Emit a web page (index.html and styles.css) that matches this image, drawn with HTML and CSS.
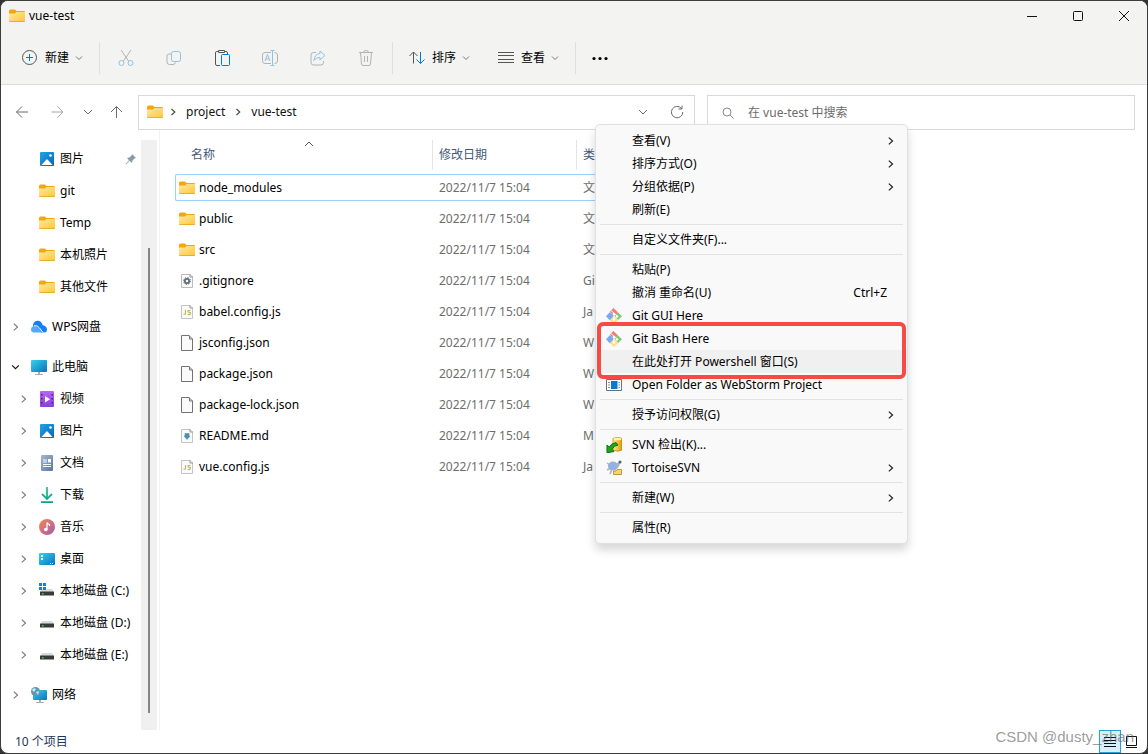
FILE: index.html
```html
<!DOCTYPE html>
<html lang="zh-CN">
<head>
<meta charset="utf-8">
<title>vue-test</title>
<link rel="stylesheet" href="styles.css">
</head>
<body>
<svg class="defs" aria-hidden="true">
  <defs>
    <linearGradient id="g-folder" x1="0" y1="0" x2="1" y2="1"><stop offset="0" stop-color="#ffe9a3"/><stop offset="1" stop-color="#ffc83d"/></linearGradient>
    <linearGradient id="g-blue" x1="0" y1="0" x2="1" y2="1"><stop offset="0" stop-color="#1fa5ea"/><stop offset="1" stop-color="#0a63b8"/></linearGradient>
    <linearGradient id="g-teal" x1="0" y1="0" x2="1" y2="1"><stop offset="0" stop-color="#36d3ea"/><stop offset="1" stop-color="#0b72bd"/></linearGradient>
    <linearGradient id="g-purple" x1="0" y1="0" x2="0" y2="1"><stop offset="0" stop-color="#b866f5"/><stop offset="1" stop-color="#8540dc"/></linearGradient>
    <linearGradient id="g-doc" x1="0" y1="0" x2="1" y2="1"><stop offset="0" stop-color="#a6b9cf"/><stop offset="1" stop-color="#57779d"/></linearGradient>
    <linearGradient id="g-music" x1="0" y1="0" x2="1" y2="1"><stop offset="0" stop-color="#f5874f"/><stop offset="1" stop-color="#a55bb2"/></linearGradient>
    <linearGradient id="g-down" x1="0" y1="0" x2="0" y2="1"><stop offset="0" stop-color="#31c48d"/><stop offset="1" stop-color="#0f9d94"/></linearGradient>
    <linearGradient id="g-gold" x1="0" y1="0" x2="1" y2="0"><stop offset="0" stop-color="#ffec80"/><stop offset="1" stop-color="#dd9b0c"/></linearGradient>
  </defs>
  <symbol id="folder" viewBox="0 0 16 16"><path d="M0 3Q0 1.500 1.500 1.500H6L7.500 3H15Q16 3 16 4V8H0Z" fill="#f2a80d"/><rect y="5" width="16" height="9" rx="1" fill="#e3a220"/><path d="M0 5.500H6L7.500 4H16V12.500Q16 13.200 15 13.200H1Q0 13.200 0 12.500Z" fill="url(#g-folder)"/></symbol>
  <symbol id="picture" viewBox="0 0 16 16"><rect x="1" y="1" width="14" height="14" rx="1" fill="url(#g-blue)"/><path d="M2.500 14 7.500 8.500Q8 8 8.500 8.500L13.500 14Z" fill="#fff"/><circle cx="11.500" cy="4.500" r="1.300" fill="#fff"/></symbol>
  <symbol id="cloud" viewBox="0 0 16 16"><path d="M2 7A4.500 4.500 0 0 1 11.500 6Q16 7 16 10.500T12.500 13.500H10Z" fill="#167ff7"/><path d="M0 10.500Q0 7.500 3 7Q5 6.500 7 8.500L11.500 13.500H3Q0 13.500 0 10.500Z" fill="#55a8ff"/><path d="M3 6.800Q6.500 6 8.500 9L12 13.500" fill="none" stroke="#fff"/></symbol>
  <symbol id="monitor" viewBox="0 0 16 16"><rect y="1" width="16" height="12" rx="1" fill="url(#g-teal)"/><path d="M7 13H9V15H7ZM4 15H12V16H4Z" fill="#a2adb6"/></symbol>
  <symbol id="video" viewBox="0 0 16 16"><rect x="1" width="14" height="16" rx="1" fill="url(#g-purple)"/><path d="M2 3H3.500V4.500H2ZM2 7H3.500V8.500H2ZM2 11H3.500V12.500H2ZM12.500 3H14V4.500H12.500ZM12.500 7H14V8.500H12.500ZM12.500 11H14V12.500H12.500Z" fill="#4a237d"/><path d="M6 5V11.500L11 8.200Z" fill="#fff"/></symbol>
  <symbol id="doc" viewBox="0 0 16 16"><rect x="2" width="12" height="16" rx="1" fill="url(#g-doc)"/><path d="M4 5H8M4 7H8M4 9.500H12M4 11.500H12" stroke="#fff"/><path d="M9 4H12V7.500H9Z" fill="#fff"/></symbol>
  <symbol id="download" viewBox="0 0 16 16"><path d="M8 0V12M3 7 8 12 13 7M2 15.200H14" fill="none" stroke="url(#g-down)" stroke-width="1.800"/></symbol>
  <symbol id="music" viewBox="0 0 16 16"><circle cx="8" cy="8" r="8" fill="url(#g-music)"/><circle cx="6.800" cy="10.500" r="1.800" fill="#fff"/><path d="M8 10.500V3.500Q8.500 5 10.500 5.500V7" fill="none" stroke="#fff" stroke-width="1.200"/></symbol>
  <symbol id="desktop" viewBox="0 0 16 16"><rect y="2" width="16" height="12" rx="1" fill="url(#g-teal)"/><path d="M2 4H4V6H2ZM2 7H4V9H2ZM11 12H12V13H11ZM13 12H14V13H13Z" fill="#fff"/></symbol>
  <symbol id="disk" viewBox="0 0 16 16"><path d="M3 6H13L15 9H1Z" fill="#d9dbdd"/><rect x="1" y="8.500" width="14" height="4" rx=".5" fill="#3a3a3a"/><path d="M3 10H4.500V11.500H3Z" fill="#30d158"/></symbol>
  <symbol id="sysdisk" viewBox="0 0 16 16"><path d="M3 6H13L15 9H1Z" fill="#d9dbdd"/><rect x="1" y="8.500" width="14" height="4" rx=".5" fill="#3a3a3a"/><path d="M3 10H4.500V11.500H3Z" fill="#30d158"/><path d="M0 0H3V3H0ZM4 0H7V3H4ZM0 4H3V7H0ZM4 4H7V7H4Z" fill="#0b86d8"/></symbol>
  <symbol id="network" viewBox="0 0 16 16"><rect x="2" y="3" width="14" height="10" rx="1" fill="url(#g-teal)"/><path d="M8 13H10V15H8ZM5 15H13V16H5Z" fill="#a2adb6"/><circle cx="4.500" cy="4.500" r="4.500" fill="#6097b5"/><path d="M1 3Q3 0 5 2L3 5ZM5 5 8 4 7 8Z" fill="#d0e8ef"/></symbol>
  <symbol id="pin" viewBox="0 0 12 12"><path d="M7 1 11 5 9.500 5.500 7.500 7.500 7 10 4.500 7.800 1 11.500 .5 11 4 7.300 2 5 4.500 4.500 6.500 2.500Z" fill="#8b98a5"/></symbol>
  <symbol id="gear-file" viewBox="0 0 16 16"><path d="M2.500 1.500H11L13.500 4V14.500H2.500Z" fill="#fafafa" stroke="#bbb"/><path d="M11 1V4H14" fill="none" stroke="#999"/><circle cx="8" cy="8" r="2.200" fill="none" stroke="#5c707c" stroke-width="1.800"/><circle cx="8" cy="8" r="3.500" fill="none" stroke="#5c707c" stroke-dasharray="1.300 1.450"/></symbol>
  <symbol id="js-file" viewBox="0 0 16 16"><path d="M2.500 1.500H11L13.500 4V14.500H2.500Z" fill="#fafafa" stroke="#c4c4c4"/><path d="M11 1V4H14" fill="none" stroke="#999"/><path d="M6.500 6V9.500Q6.500 10.500 4.500 10.200M11.500 6.500H10Q8.800 6.500 9 7.500T10.500 8.300T11.200 9.700T8.500 10.300" fill="none" stroke="#bcbf3c" stroke-width="1.200"/></symbol>
  <symbol id="md-file" viewBox="0 0 16 16"><path d="M2.500 1.500H11L13.500 4V14.500H2.500Z" fill="#fafafa" stroke="#c4c4c4"/><path d="M11 1V4H14" fill="none" stroke="#999"/><path d="M6 5 7 6 8 5 9 6 10 5V8H11L8 11.500 5 8H6Z" fill="#4b90aa" stroke="#4b90aa" stroke-width=".5"/></symbol>
  <symbol id="blank-file" viewBox="0 0 16 16"><path d="M2.500.5H10L13.500 4V15.500H2.500Z" fill="#fafafa" stroke="#737373"/><path d="M10.500.5V4H13.500" fill="none" stroke="#737373"/></symbol>
  <symbol id="chev-r" viewBox="0 0 8 8"><path d="M2.500 1 5.800 4 2.500 7" fill="none" stroke="currentColor" stroke-width="1.100"/></symbol>
  <symbol id="chev-d" viewBox="0 0 8 8"><path d="M1 2.500 4 5.500 7 2.500" fill="none" stroke="currentColor"/></symbol>
  <symbol id="git" viewBox="0 0 16 16"><path d="M7.500 0 12 4.500 8 8.500 4 3.500Z" fill="#f47c77"/><path d="M4 4 8 8 4 12.500 0 8.300Z" fill="#78a9f5"/><path d="M12 4.500 16 8.300 12 12 8.500 8Z" fill="#80c776"/><path d="M8 8 12 12 8 16 4 12Z" fill="#ffdf80"/><path d="M5 2.500 11 8M8 5.500V12" stroke="#fff"/><circle cx="8" cy="6" r="1.300" fill="#fff"/><circle cx="11" cy="8.500" r="1.300" fill="#fff"/><circle cx="8" cy="11.500" r="1.300" fill="#fff"/></symbol>
  <symbol id="program" viewBox="0 0 16 16"><path d="M.5 2.500H15.500V13.500H.5Z" fill="#fff" stroke="#68737b"/><path d="M2 5.500H4M2 8H4M2 10.500H4M12.500 5.500H14M12.500 8H14M12.500 10.500H14" stroke="#888"/><rect x="5" y="4" width="6.500" height="8" fill="#0a78d0"/></symbol>
  <symbol id="svn" viewBox="0 0 16 16"><path d="M7 1.500Q11.500-1 16 1.500V13Q12 15.500 7 13Z" fill="url(#g-gold)" stroke="#b58113" stroke-width=".7"/><ellipse cx="11.500" cy="2" rx="4" ry="1.300" fill="#fff3b2"/><path d="M1 8 3.300 10Q5 6.500 10 5.500L12 8Q8 8.500 6 12.200L8 14.500 1 15.800Z" fill="#20a61c" stroke="#08710d"/></symbol>
  <symbol id="tortoise" viewBox="0 0 16 16"><path d="M1 3 4 5M1 10 4 8.500M4 14 5.500 10M11 4 15 2" stroke="#a9b3bd" stroke-width="1.500"/><ellipse cx="7" cy="6" rx="4.500" ry="4" fill="#93b0ea" stroke="#9aaccb"/><path d="M10.500 8 13 4" stroke="#a5b1bb" stroke-width="2"/><circle cx="14" cy="2" r="1.500" fill="#3b6684"/><path d="M7.500 11H10L11 9.500H15.500V14.500H7.500Z" fill="#f8d569" stroke="#a98525" stroke-width=".8"/></symbol>
</svg>

<div class="window">
  <header class="titlebar">
    <svg class="ico"><use href="#folder"/></svg>
    <h1 class="title">vue-test</h1>
    <div class="controls">
      <button class="control" aria-label="最小化"><svg class="ico" viewBox="0 0 16 16"><path d="M3 8.500H13" class="ln black"/></svg></button>
      <button class="control" aria-label="最大化"><svg class="ico" viewBox="0 0 16 16"><rect x="3.500" y="3.500" width="9" height="9" rx="1" class="ln black"/></svg></button>
      <button class="control" aria-label="关闭"><svg class="ico" viewBox="0 0 16 16"><path d="M3 3 13 13M13 3 3 13" class="ln black"/></svg></button>
    </div>
  </header>

  <div class="toolbar" role="toolbar">
    <button class="tool"><svg class="ico18" viewBox="0 0 18 18"><circle cx="8.500" cy="8.500" r="7" class="ln dark"/><path d="M8.500 5V12M5 8.500H12" class="ln accent"/></svg>新建<svg class="chev"><use href="#chev-d"/></svg></button>
    <span class="divider after-tool"></span>
    <div class="icon-tools">
      <button class="icon-tool faded" aria-label="剪切"><svg class="ico18" viewBox="0 0 18 18"><path d="M4 1 11.500 12M14 1 6.500 12" class="ln dark"/><circle cx="4.500" cy="14" r="2.500" class="ln accent"/><circle cx="13.500" cy="14" r="2.500" class="ln accent"/></svg></button>
      <button class="icon-tool faded" aria-label="复制"><svg class="ico18" viewBox="0 0 18 18"><path d="M6 5H4Q2 5 2 7V13Q2 15.500 4.500 15.500H8Q10 15.500 10.500 13.500" class="ln dark"/><rect x="6.500" y="2.500" width="9" height="10" rx="2" class="ln accent"/></svg></button>
      <button class="icon-tool" aria-label="粘贴"><svg class="ico18" viewBox="0 0 18 18"><path d="M6 2.500H3.500Q2.500 2.500 2.500 4V15Q2.500 16.500 4 16.500H7M12 2.500H13Q14.500 2.500 14.500 4V5M5.500 1.500H11.500V3.500H5.500Z" class="ln dark"/><rect x="8.500" y="5.500" width="8" height="11" rx="1" class="ln accent"/></svg></button>
      <button class="icon-tool faded" aria-label="重命名"><svg class="ico18" viewBox="0 0 18 18"><path d="M10 3.500H4Q1.500 3.500 1.500 6V12Q1.500 14.500 4 14.500H10M13.500 3.500Q16.500 3.500 16.500 6V12Q16.500 14.500 13.500 14.500" class="ln dark"/><path d="M11.500 1.500V16.500M9.500 1.500H13.500M9.500 16.500H13.500M4 12 6.500 5.500 9 12M5 10H8" class="ln accent"/></svg></button>
      <button class="icon-tool faded" aria-label="共享"><svg class="ico18" viewBox="0 0 18 18"><path d="M7 3.500H4.500Q2 3.500 2 6V13.500Q2 16 4.500 16H12Q14.500 16 14.500 13.500V12" class="ln dark"/><path d="M11 2 16 6.500 11 11V8.500Q7 8 5 11.500Q5.500 5 11 4.500Z" class="ln accent"/></svg></button>
      <button class="icon-tool faded" aria-label="删除"><svg class="ico18" viewBox="0 0 18 18"><path d="M2 3.500H16M6.500 3.500Q6.500 1.500 9 1.500T11.500 3.500M3.500 3.500 4.500 15Q4.500 16.500 6 16.500H12Q13.500 16.500 13.500 15L14.500 3.500M7.500 7V13M10.500 7V13" class="ln dark"/></svg></button>
    </div>
    <span class="divider"></span>
    <button class="tool sort"><svg class="ico18" viewBox="0 0 18 18"><path d="M5.500 14.500V3M1.500 7 5.500 3 9.500 7" class="ln dark"/><path d="M12.500 3V14.500M8.500 10.500 12.500 14.500 16.500 10.500" class="ln accent"/></svg>排序<svg class="chev"><use href="#chev-d"/></svg></button>
    <button class="tool view"><svg class="ico18" viewBox="0 0 18 18"><path d="M1 3.500H17M1 6.500H17M1 10.500H17M1 13.500H17" class="ln dark"/></svg>查看<svg class="chev"><use href="#chev-d"/></svg></button>
    <span class="divider after-tool"></span>
    <button class="tool more" aria-label="更多"><svg class="ico18" viewBox="0 0 18 18"><circle cx="3" cy="9.500" r="1.600"/><circle cx="9" cy="9.500" r="1.600"/><circle cx="15" cy="9.500" r="1.600"/></svg></button>
  </div>

  <div class="navbar">
    <div class="nav-buttons">
      <button class="nav-btn" aria-label="后退"><svg class="ico" viewBox="0 0 16 16"><path d="M14 8H2.500M8 2.500 2.500 8 8 13.500" class="ln gray"/></svg></button>
      <button class="nav-btn off" aria-label="前进"><svg class="ico" viewBox="0 0 16 16"><path d="M2.500 8H14M8.500 2.500 14 8 8.500 13.500" class="ln gray"/></svg></button>
      <button class="nav-btn narrow" aria-label="最近位置"><svg class="ico" viewBox="0 0 16 16"><path d="M4 6 8 10 12 6" class="ln gray"/></svg></button>
      <button class="nav-btn narrow" aria-label="上移"><svg class="ico" viewBox="0 0 16 16"><path d="M8.500 14V2.500M3 8 8.500 2.500 14 8" class="ln gray"/></svg></button>
    </div>
    <div class="address">
      <svg class="ico"><use href="#folder"/></svg>
      <svg class="crumb-chev"><use href="#chev-r"/></svg>
      <a class="crumb" href="#project">project</a>
      <svg class="crumb-chev"><use href="#chev-r"/></svg>
      <a class="crumb" href="#vue-test">vue-test</a>
      <button class="addr-btn first" aria-label="历史记录"><svg class="ico" viewBox="0 0 16 16"><path d="M4 6 8 10 12 6" class="ln gray"/></svg></button>
      <button class="addr-btn" aria-label="刷新"><svg class="ico" viewBox="0 0 16 16"><path d="M12.500 4.500A5.700 5.700 0 1 0 13.800 8M13 1.500V5H9.500" class="ln gray"/></svg></button>
    </div>
    <label class="search">
      <svg class="ico" viewBox="0 0 16 16"><circle cx="7" cy="7" r="4" class="ln light"/><path d="M10 10 13.500 13.500" class="ln light"/></svg>
      <input class="search-input" type="text" aria-label="搜索" placeholder="在 vue-test 中搜索">
    </label>
  </div>

  <div class="main">
    <nav class="sidebar">
      <ul class="tree">
        <li class="node child"><span class="twist"></span><svg class="ico"><use href="#picture"/></svg>图片<svg class="pin"><use href="#pin"/></svg></li>
        <li class="node child"><span class="twist"></span><svg class="ico"><use href="#folder"/></svg>git</li>
        <li class="node child"><span class="twist"></span><svg class="ico"><use href="#folder"/></svg>Temp</li>
        <li class="node child"><span class="twist"></span><svg class="ico"><use href="#folder"/></svg>本机照片</li>
        <li class="node child"><span class="twist"></span><svg class="ico"><use href="#folder"/></svg>其他文件</li>
        <li class="node root"><svg class="twist"><use href="#chev-r"/></svg><svg class="ico"><use href="#cloud"/></svg>WPS网盘</li>
        <li class="node root"><svg class="twist open"><use href="#chev-d"/></svg><svg class="ico"><use href="#monitor"/></svg>此电脑</li>
        <li class="node child"><svg class="twist"><use href="#chev-r"/></svg><svg class="ico"><use href="#video"/></svg>视频</li>
        <li class="node child"><svg class="twist"><use href="#chev-r"/></svg><svg class="ico"><use href="#picture"/></svg>图片</li>
        <li class="node child"><svg class="twist"><use href="#chev-r"/></svg><svg class="ico"><use href="#doc"/></svg>文档</li>
        <li class="node child"><svg class="twist"><use href="#chev-r"/></svg><svg class="ico"><use href="#download"/></svg>下载</li>
        <li class="node child"><svg class="twist"><use href="#chev-r"/></svg><svg class="ico"><use href="#music"/></svg>音乐</li>
        <li class="node child"><svg class="twist"><use href="#chev-r"/></svg><svg class="ico"><use href="#desktop"/></svg>桌面</li>
        <li class="node child"><svg class="twist"><use href="#chev-r"/></svg><svg class="ico"><use href="#sysdisk"/></svg>本地磁盘 (C:)</li>
        <li class="node child"><svg class="twist"><use href="#chev-r"/></svg><svg class="ico"><use href="#disk"/></svg>本地磁盘 (D:)</li>
        <li class="node child"><svg class="twist"><use href="#chev-r"/></svg><svg class="ico"><use href="#disk"/></svg>本地磁盘 (E:)</li>
        <li class="node root"><svg class="twist"><use href="#chev-r"/></svg><svg class="ico"><use href="#network"/></svg>网络</li>
      </ul>
      <div class="scroll"><span class="thumb"></span></div>
    </nav>

    <section class="files">
      <table class="list">
        <colgroup><col class="c-name"><col class="c-date"><col class="c-type"></colgroup>
        <thead><tr><th class="name-head"><div class="head-cell">名称<svg class="sort-mark" viewBox="0 0 10 6"><path d="M1 5 5 1 9 5" class="ln dark"/></svg></div></th><th>修改日期</th><th>类</th></tr></thead>
        <tbody>
          <tr class="selected"><td><div class="file"><svg class="ico"><use href="#folder"/></svg>node_modules</div></td><td>2022/11/7 15:04</td><td>文</td></tr>
          <tr><td><div class="file"><svg class="ico"><use href="#folder"/></svg>public</div></td><td>2022/11/7 15:04</td><td>文</td></tr>
          <tr><td><div class="file"><svg class="ico"><use href="#folder"/></svg>src</div></td><td>2022/11/7 15:04</td><td>文</td></tr>
          <tr><td><div class="file"><svg class="ico"><use href="#gear-file"/></svg>.gitignore</div></td><td>2022/11/7 15:04</td><td>Gi</td></tr>
          <tr><td><div class="file"><svg class="ico"><use href="#js-file"/></svg>babel.config.js</div></td><td>2022/11/7 15:04</td><td>Ja</td></tr>
          <tr><td><div class="file"><svg class="ico"><use href="#blank-file"/></svg>jsconfig.json</div></td><td>2022/11/7 15:04</td><td>W</td></tr>
          <tr><td><div class="file"><svg class="ico"><use href="#blank-file"/></svg>package.json</div></td><td>2022/11/7 15:04</td><td>W</td></tr>
          <tr><td><div class="file"><svg class="ico"><use href="#blank-file"/></svg>package-lock.json</div></td><td>2022/11/7 15:04</td><td>W</td></tr>
          <tr><td><div class="file"><svg class="ico"><use href="#md-file"/></svg>README.md</div></td><td>2022/11/7 15:04</td><td>M</td></tr>
          <tr><td><div class="file"><svg class="ico"><use href="#js-file"/></svg>vue.config.js</div></td><td>2022/11/7 15:04</td><td>Ja</td></tr>
        </tbody>
      </table>
    </section>
  </div>

  <footer class="status">
    <span class="count">10 个项目</span>
    <div class="views">
      <button class="view-btn on" aria-label="详细信息"><svg class="ico" viewBox="0 0 16 16"><path d="M2 3.500H14M2 6.500H14M2 9.500H14M2 12.500H14" class="ln black"/></svg></button>
      <button class="view-btn" aria-label="大图标"><svg class="ico" viewBox="0 0 16 16"><path d="M2.500 2.500H12.500V11.500H2.500ZM2 13.500H13" class="ln black"/></svg></button>
    </div>
  </footer>

  <div class="menu" role="menu">
    <button class="item" role="menuitem"><span class="slot"></span><span class="label">查看(V)</span><svg class="arrow"><use href="#chev-r"/></svg></button>
    <button class="item" role="menuitem"><span class="slot"></span><span class="label">排序方式(O)</span><svg class="arrow"><use href="#chev-r"/></svg></button>
    <button class="item" role="menuitem"><span class="slot"></span><span class="label">分组依据(P)</span><svg class="arrow"><use href="#chev-r"/></svg></button>
    <button class="item" role="menuitem"><span class="slot"></span><span class="label">刷新(E)</span></button>
    <hr class="sep">
    <button class="item" role="menuitem"><span class="slot"></span><span class="label">自定义文件夹(F)...</span></button>
    <hr class="sep">
    <button class="item" role="menuitem"><span class="slot"></span><span class="label">粘贴(P)</span></button>
    <button class="item" role="menuitem"><span class="slot"></span><span class="label">撤消 重命名(U)</span><span class="keys">Ctrl+Z</span></button>
    <button class="item" role="menuitem"><svg class="slot"><use href="#git"/></svg><span class="label">Git GUI Here</span></button>
    <div class="marked">
      <button class="item" role="menuitem"><svg class="slot"><use href="#git"/></svg><span class="label">Git Bash Here</span></button>
      <button class="item hovered" role="menuitem"><span class="slot"></span><span class="label">在此处打开 Powershell 窗口(S)</span></button>
    </div>
    <button class="item" role="menuitem"><svg class="slot"><use href="#program"/></svg><span class="label">Open Folder as WebStorm Project</span></button>
    <hr class="sep">
    <button class="item" role="menuitem"><span class="slot"></span><span class="label">授予访问权限(G)</span><svg class="arrow"><use href="#chev-r"/></svg></button>
    <hr class="sep">
    <button class="item" role="menuitem"><svg class="slot"><use href="#svn"/></svg><span class="label">SVN 检出(K)...</span></button>
    <button class="item" role="menuitem"><svg class="slot"><use href="#tortoise"/></svg><span class="label">TortoiseSVN</span><svg class="arrow"><use href="#chev-r"/></svg></button>
    <hr class="sep">
    <button class="item" role="menuitem"><span class="slot"></span><span class="label">新建(W)</span><svg class="arrow"><use href="#chev-r"/></svg></button>
    <hr class="sep">
    <button class="item" role="menuitem"><span class="slot"></span><span class="label">属性(R)</span></button>
  </div>
  <span class="watermark">CSDN @dusty_zhan</span>
</div>
</body>
</html>
```
FILE: styles.css
```css
* { box-sizing: border-box; }
body {
  margin: 0;
  background: #333;
  color: #000;
  font: 12px/16px "Noto Sans", "Noto Sans CJK SC", sans-serif;
}
button { border: 0; padding: 0; margin: 0; background: none; font: inherit; color: inherit; }
svg { flex: none; display: block; }
.defs { position: absolute; width: 0; height: 0; }
.ico { width: 16px; height: 16px; }
.ico18 { width: 18px; height: 18px; }
.ln { fill: none; stroke-width: 1; }
.dark { stroke: #555; }
.gray { stroke: #6b6b6b; }
.light { stroke: #8a8a8a; }
.black { stroke: #111; }
.accent { stroke: #0078d4; }

.window {
  position: relative;
  display: flex;
  flex-direction: column;
  min-height: 100vh;
  border: 1px solid #3c3c3c;
  border-radius: 8px;
  background: #fff;
  overflow: hidden;
}

/* Title bar */
.titlebar { display: flex; align-items: center; gap: 4px; height: 30px; padding-left: 8px; background: #f3f3f2; }
.title { margin: 0; font-size: 12px; font-weight: 400; line-height: 16px; flex: 1; }
.controls { display: flex; height: 100%; }
.control { display: flex; align-items: center; justify-content: center; width: 46px; }

/* Toolbar */
.toolbar { display: flex; align-items: center; height: 54px; padding: 1px 0 0 20px; background: #f3f3f2; border-bottom: 1px solid #dcdcdc; }
.tool { display: flex; align-items: center; gap: 6px; }
.chev { width: 8px; height: 8px; color: #777; }
.divider { width: 1px; height: 32px; background: #e0e0e0; }
.after-tool { margin-left: 16px; }
.icon-tools { display: flex; padding: 0 2px; }
.icon-tool { display: flex; justify-content: center; width: 48px; }
.faded svg { opacity: .4; }
.sort { margin-left: 15px; }
.view { margin-left: 27px; }
.more { margin-left: 15px; }

/* Address row */
.navbar { display: flex; align-items: center; padding: 10px 12px 0 3px; }
.nav-buttons { display: flex; width: 134px; padding-bottom: 1px; }
.nav-btn { display: flex; justify-content: center; width: 35px; }
.nav-btn.narrow { width: 28px; }
.off { opacity: .6; }
.address, .search { display: flex; align-items: center; height: 35px; border: 1px solid #d9d9d9; background: #fff; }
.address { flex: 547 1 0; padding: 0 0 2px 8px; }
.crumb { padding-right: 3px; color: #111; text-decoration: none; }
.crumb-chev { width: 8px; height: 8px; margin: 0 9px 0 6px; color: #444; }
.addr-btn { width: 34px; display: flex; justify-content: center; }
.addr-btn.first { margin-left: auto; }
.search { flex: 414 1 0; margin-left: 12px; padding-left: 12px; gap: 12px; }
.search-input { flex: 1; min-width: 0; border: 0; outline: 0; padding: 0; background: none; font: inherit; color: #111; }
.search-input::placeholder { color: #6b6b6b; opacity: 1; }

/* Body */
.main { flex: 1; display: flex; }
.sidebar { display: flex; width: 159px; padding-top: 10px; border-right: 1px solid #f2f2f2; }
.tree { flex: 1; margin: 0; padding: 3px 0 0; list-style: none; }
.node { display: flex; align-items: center; gap: 5px; height: 32px; padding-right: 4px; white-space: nowrap; }
.root { margin-top: 8px; padding-left: 10px; }
.child { padding-left: 18px; }
.twist { width: 9px; height: 10px; margin-right: 6px; color: #808080; }
.twist.open { color: #111; }
.pin { width: 12px; height: 12px; margin-left: auto; }
.scroll { width: 16px; margin-right: 2px; background: #f0f0f0; display: flex; justify-content: center; padding: 108px 0 17px; }
.thumb { width: 2px; background: #858585; }

/* File list */
.files { flex: 1; padding: 6px 0 0 15px; }
.list { width: 425px; table-layout: fixed; border-spacing: 0 4px; }
.c-name { width: 258px; }
.c-date { width: 144px; }
.list th { height: 30px; padding: 0 0 0 6px; border-right: 1px solid #e4e4e4; font-weight: 400; text-align: left; color: #44597a; white-space: nowrap; }
.list .name-head { padding-left: 16px; }
.head-cell { display: flex; align-items: center; }
.sort-mark { width: 10px; height: 6px; margin: 0 0 22px 89px; }
.list td { height: 27px; padding: 0 0 0 6px; border: solid transparent; border-width: 1px 0; color: #6d6d6d; white-space: nowrap; }
.list td:first-child { padding-left: 4px; color: #000; }
.list .selected td { border-color: #99d1ff; }
.list .selected td:first-child { border-left: 1px solid #99d1ff; border-radius: 2px 0 0 2px; padding-left: 3px; }
.file { display: flex; align-items: center; gap: 4px; }

/* Status bar */
.status { display: flex; align-items: center; justify-content: space-between; height: 23px; padding: 0 4px 0 14px; color: #1e395b; }
.views { display: flex; }
.view-btn { display: flex; align-items: center; justify-content: center; width: 22px; height: 23px; }
.view-btn.on { border: 1px solid #26a0da; background: #d8effb; }

/* Context menu */
.menu {
  position: absolute;
  top: 123px;
  left: 594px;
  width: 313px;
  padding: 4px 0;
  border: 1px solid #e0e0e0;
  border-radius: 5px;
  background: #f9f9f9;
  box-shadow: 0 6px 10px rgba(0, 0, 0, .16);
}
.item { display: flex; align-items: center; gap: 10px; width: 100%; height: 23px; padding: 0 12px 0 10px; text-align: left; }
.slot { width: 16px; height: 16px; flex: none; }
.label { flex: 1; white-space: nowrap; }
.arrow { width: 9px; height: 10px; color: #222; }
.keys { padding-right: 8px; }
.hovered { background: #f0f0f0; }
.sep { height: 1px; margin: 3px 4px; border: 0; background: #e2e2e2; }
.marked { position: relative; }
.marked::after {
  content: "";
  position: absolute;
  inset: -5px 1px -6px 1px;
  border: 4px solid #f54a45;
  border-radius: 6px;
  pointer-events: none;
}

.watermark { position: absolute; right: 13px; bottom: 7px; font: 15px/18px "Liberation Sans", Arial, sans-serif; color: rgba(100, 100, 100, .65); pointer-events: none; }
```
